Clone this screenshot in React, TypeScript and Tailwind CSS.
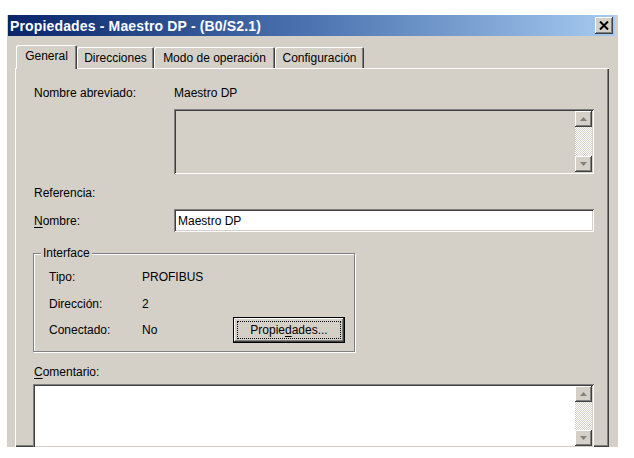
import React from "react";

const raised =
  "shadow-[inset_-1px_-1px_0_#404040,inset_1px_1px_0_#ffffff,inset_-2px_-2px_0_#808080,inset_2px_2px_0_#d4d0c8]";
const sunken =
  "shadow-[inset_1px_1px_0_#808080,inset_-1px_-1px_0_#ffffff,inset_2px_2px_0_#404040,inset_-2px_-2px_0_#d4d0c8]";

function Arrow({ up }: { up: boolean }) {
  return (
    <svg width="7" height="4" viewBox="0 0 7 4" className="block">
      {up ? (
        <polygon points="3.5,0 7,4 0,4" fill="#808080" />
      ) : (
        <polygon points="0,0 7,0 3.5,4" fill="#808080" />
      )}
    </svg>
  );
}

function ScrollBar() {
  return (
    <div className="w-[17px] h-full flex flex-col">
      <div className={`h-[16px] w-[17px] shrink-0 bg-[#d4d0c8] flex items-center justify-center ${raised}`}>
        <Arrow up />
      </div>
      <div className="flex-1 bg-[repeating-conic-gradient(#ffffff_0%_25%,#d4d0c8_0%_50%)] bg-[length:2px_2px]" />
      <div className={`h-[16px] w-[17px] shrink-0 bg-[#d4d0c8] flex items-center justify-center ${raised}`}>
        <Arrow up={false} />
      </div>
    </div>
  );
}

function Tab({ label, w, active }: { label: string; w: string; active?: boolean }) {
  if (active) {
    return (
      <div
        className={`${w} h-[24px] -mb-[1px] relative z-10 bg-[#d4d0c8] flex items-center justify-center pb-[2px] rounded-t-[2px] shadow-[inset_1px_1px_0_#ffffff,inset_-1px_0_0_#404040,inset_-2px_0_0_#808080]`}
      >
        {label}
      </div>
    );
  }
  return (
    <div
      className={`${w} h-[21px] bg-[#d4d0c8] flex items-center justify-center rounded-t-[2px] shadow-[inset_1px_1px_0_#ffffff,inset_-1px_0_0_#404040,inset_-2px_0_0_#808080]`}
    >
      {label}
    </div>
  );
}

export default function App() {
  return (
    <div className="w-[634px] h-[458px] bg-white overflow-hidden font-['Liberation_Sans',Arial,sans-serif] text-[12px] text-black leading-[14px]">
      <div className="ml-[7px] mt-[15px] w-[611px] h-[432px] bg-[#d4d0c8] overflow-hidden flex flex-col pl-[1px] pr-[3px]">
        {/* title bar */}
        <div className="h-[21px] shrink-0 flex items-center bg-gradient-to-r from-[#0a246a] via-[#4d74b0] to-[#a6caf0]">
          <div className="pl-[2px] text-white font-bold text-[14px] leading-[16px] tracking-[0.15px] flex-1">
            Propiedades - Maestro DP - (B0/S2.1)
          </div>
          <div className={`w-[18px] h-[17px] mr-[2px] bg-[#d4d0c8] flex items-center justify-center ${raised}`}>
            <svg width="10" height="9" viewBox="0 0 10 9">
              <path d="M1 0.5 L9 8.5 M9 0.5 L1 8.5" stroke="#000" strokeWidth="2" />
            </svg>
          </div>
        </div>

        {/* tabs */}
        <div className="mt-[9px] shrink-0 pl-[8px] flex items-end h-[23px]">
          <Tab label="General" w="w-[61px]" active />
          <Tab label="Direcciones" w="w-[77px]" />
          <Tab label="Modo de operación" w="w-[121px]" />
          <Tab label="Configuración" w="w-[89px]" />
        </div>

        {/* panel */}
        <div className="ml-[7px] mr-[6px] flex-1 min-h-0 overflow-hidden flex flex-col pt-[18px] pl-[18px] pr-[15px] shadow-[inset_1px_1px_0_#ffffff,inset_-1px_-1px_0_#404040,inset_-2px_-2px_0_#808080]">
          <div className="flex h-[14px] shrink-0 items-center">
            <div className="w-[141px] pl-[1px]">Nombre abreviado:</div>
            <div>Maestro DP</div>
          </div>

          <div className={`ml-[141px] mt-[9px] h-[65px] shrink-0 bg-[#d4d0c8] flex justify-end p-[2px] ${sunken}`}>
            <ScrollBar />
          </div>

          <div className="mt-[12px] h-[14px] shrink-0 flex items-center pl-[1px]">Referencia:</div>

          <div className="mt-[9px] flex items-center h-[23px] shrink-0">
            <div className="w-[141px] pl-[1px]">
              <span className="underline underline-offset-2">N</span>ombre:
            </div>
            <div className={`flex-1 h-[23px] bg-white flex items-center pl-[4px] ${sunken}`}>Maestro DP</div>
          </div>

          {/* group box */}
          <div className="mt-[21px] w-[322px] h-[99px] shrink-0 relative border border-[#808080] shadow-[1px_1px_0_#ffffff,inset_1px_1px_0_#ffffff] pl-[15px] pt-[16px]">
            <div className="absolute -top-[8px] left-[7px] px-[2px] bg-[#d4d0c8]">Interface</div>
            <div className="flex h-[14px] items-center">
              <div className="w-[93px]">Tipo:</div>
              <div>PROFIBUS</div>
            </div>
            <div className="flex h-[14px] items-center mt-[13px]">
              <div className="w-[93px]">Dirección:</div>
              <div>2</div>
            </div>
            <div className="flex h-[26px] items-center mt-[6px]">
              <div className="w-[93px]">Conectado:</div>
              <div className="w-[91px]">No</div>
              <div className="w-[112px] h-[26px] border border-black bg-[#d4d0c8] p-0">
                <div className={`w-full h-full p-[3px] ${raised}`}>
                  <div className="w-full h-full border border-dotted border-black flex items-center justify-center">
                    Propie<span className="underline underline-offset-2">d</span>ades...
                  </div>
                </div>
              </div>
            </div>
          </div>

          <div className="mt-[13px] h-[14px] shrink-0 flex items-center pl-[1px]">
            <span className="underline underline-offset-2">C</span>omentario:
          </div>

          <div className={`mt-[5px] h-[64px] bg-white flex justify-end p-[2px] shrink-0 ${sunken}`}>
            <ScrollBar />
          </div>
        </div>
      </div>
    </div>
  );
}
